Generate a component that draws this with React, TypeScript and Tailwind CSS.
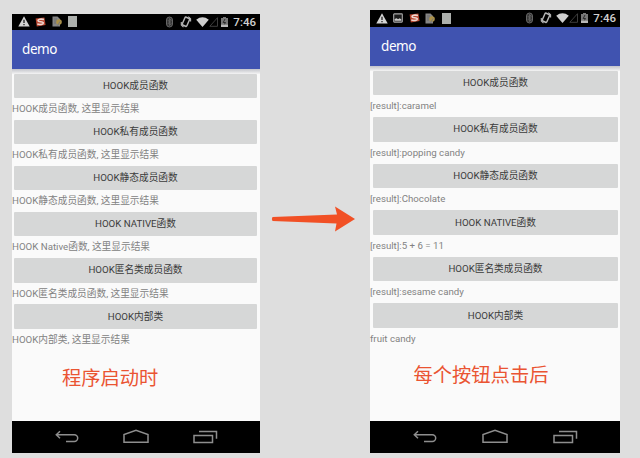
import React from "react";

type Row = { button: string; result: string };

const before: Row[] = [
  { button: "HOOK成员函数", result: "HOOK成员函数, 这里显示结果" },
  { button: "HOOK私有成员函数", result: "HOOK私有成员函数, 这里显示结果" },
  { button: "HOOK静态成员函数", result: "HOOK静态成员函数, 这里显示结果" },
  { button: "HOOK NATIVE函数", result: "HOOK Native函数, 这里显示结果" },
  { button: "HOOK匿名类成员函数", result: "HOOK匿名类成员函数, 这里显示结果" },
  { button: "HOOK内部类", result: "HOOK内部类, 这里显示结果" },
];

const results = [
  "[result]:caramel",
  "[result]:popping candy",
  "[result]:Chocolate",
  "[result]:5 + 6 = 11",
  "[result]:sesame candy",
  "fruit candy",
];

const after: Row[] = before.map((row, i) => ({ button: row.button, result: results[i] }));

function WarningIcon() {
  return (
    <svg className="block h-[11px] w-[12px]" viewBox="0 0 12 11">
      <path d="M6 .3 11.7 10.6H.3Z" fill="#d4d4d4" />
      <path d="M6 3.8V7M6 8v1.3" stroke="#222" strokeWidth="1.3" />
    </svg>
  );
}

function PhotoIcon() {
  return (
    <svg className="block h-[10px] w-[10px]" viewBox="0 0 10 10">
      <rect x=".7" y=".9" width="8.6" height="8.2" rx=".6" fill="#1c1c1c" stroke="#aaa" strokeWidth="1.1" />
      <path d="M1.6 7.8V6L3.7 5.2 5 6.3 6.7 5.2 8.4 6.600V7.800Z" fill="#ccc" />
    </svg>
  );
}

function SogouIcon() {
  return (
    <svg className="block h-[10px] w-[11px]" viewBox="0 0 11 10">
      <path d="M.6 1.6 9.4.4 10.6 8 1.8 9.6Z" fill="#b8452e" />
      <path d="M9 2.500C6 1.700 2.900 2.200 3 3.700c.1 1.500 5.300.5 5.300 2.200C8.300 7.500 5 7.800 2.300 7.100" fill="none" stroke="#ecd6cf" strokeWidth="1.600" />
    </svg>
  );
}

function NoteIcon() {
  return (
    <svg className="block h-[11px] w-[10px]" viewBox="0 0 10 11">
      <path d="M.5.5H5.500L8 3V10.500H.5Z" fill="#858585" />
      <path d="M2 3h3M2 5h3M2 7h2" stroke="#666" strokeWidth=".7" />
      <circle cx="7" cy="6" r="2.800" fill="#ab9148" />
      <path d="M5.500 9.700 8 5.500" stroke="#777" strokeWidth="1" />
    </svg>
  );
}

function SystemIcons() {
  return (
    <svg className="block h-[12px] w-[66px]" viewBox="0 0 66 12">
      <g fill="none" stroke="#666" strokeWidth="1">
        <rect x="1.500" y="1" width="6" height="10" rx="3" fill="#353535" />
        <path d="M2.800 4 6.200 7.800 4.500 9.500V2.500L6.200 4.200 2.800 8" strokeWidth=".8" />
      </g>
      <g fill="none" stroke="#b5b5b5">
        <rect x="18.400" y="1.500" width="5" height="8.500" rx="1" transform="rotate(24 20.900 5.800)" strokeWidth="1.500" />
        <path d="M16.300 6v3l2.200 2.200M25.600 5.500V2.700L23.300.7" strokeWidth="1.100" />
      </g>
      <path d="M31.200 3.700Q37.500-1.200 43.800 3.700L37.500 11Z" fill="#cfcfcf" />
      <path d="M44.800 10.300H52.500V1.700Z" fill="none" stroke="#444" strokeWidth=".9" />
      <path d="M58 1h3v1h2V11H56V2h2Z" fill="#777" />
      <path d="M60 3 58.200 6.500H60.500L59.300 8.500" fill="none" stroke="#222" strokeWidth=".9" />
      <path d="M56 8.700h7V11h-7Z" fill="#b9b9b9" />
    </svg>
  );
}

function NavBar() {
  return (
    <div className="flex h-[31.500px] shrink-0 items-center justify-between bg-black px-[42.500px]">
      <svg className="block h-[14px] w-[25px]" viewBox="0 0 25 14" fill="none" stroke="#8e8e8e" strokeWidth="1.500">
        <path d="M5 1.300 1.300 4.700 5 8.200M1.500 4.700H19.300A3.400 3.400 0 0 1 19.300 11.500H11" />
      </svg>
      <svg className="block h-[15px] w-[27px]" viewBox="0 0 27 15" fill="none" stroke="#8e8e8e" strokeWidth="1.500">
        <path d="M1 13.300V5.600L13 1.300 25 5.600V13.300Z" />
      </svg>
      <svg className="block h-[14px] w-[25px]" viewBox="0 0 25 14" fill="none" stroke="#8e8e8e" strokeWidth="1.500">
        <path d="M1 5.500H19.500V12.600H1ZM6 1.600H23.500V8.700" />
      </svg>
    </div>
  );
}

type PhoneProps = {
  rows: Row[];
  caption: string;
  photo?: boolean;
  frame: string;
  bar: string;
  row: string;
  button: string;
  captionBox: string;
};

function Phone({ rows, caption, photo, frame, bar, row, button, captionBox }: PhoneProps) {
  return (
    <section className={"flex shrink-0 flex-col bg-[#fafafa] " + frame}>
      <div className="flex h-[16.500px] shrink-0 items-center justify-between bg-black pr-[4px] pl-[5.500px]">
        <div className="flex items-center gap-[5.500px]">
          <WarningIcon />
          {photo && <PhotoIcon />}
          <SogouIcon />
          <NoteIcon />
          <span className="ml-[1px] h-[11px] w-[9px] bg-[#adb0ad]" />
        </div>
        <div className="flex items-center gap-[2px]">
          <SystemIcons />
          <span className="text-[11.500px] leading-[16px] font-medium text-[#d0d0d0]">7:46</span>
        </div>
      </div>
      <header className={"flex shrink-0 items-center bg-[#4053b0] font-['Noto_Sans',sans-serif] text-[13.500px] tracking-[-0.4px] text-white " + bar}>
        demo
      </header>
      <div className="h-[5px] shrink-0 bg-linear-to-b from-[#c3c4cb] to-[#f4f4f4]" />
      {rows.map((item) => (
        <div key={item.button} className={"flex shrink-0 flex-col " + row}>
          <button className={"flex h-[24.500px] shrink-0 items-center justify-center rounded-[1px] bg-[#d6d7d7] text-[9.700px] leading-none whitespace-nowrap text-[#3b3b3b] " + button}>
            {item.button}
          </button>
          <p className="pt-[4px] text-[9.700px] leading-[14px] whitespace-nowrap text-[#828282]">{item.result}</p>
        </div>
      ))}
      <p className={"text-[19.300px] leading-[28px] whitespace-nowrap text-[#ea5432] " + captionBox}>{caption}</p>
      <div className="flex-1" />
      <NavBar />
    </section>
  );
}

export default function App() {
  return (
    <main className="flex h-[458px] w-[640px] overflow-hidden bg-[#dedede] pl-[12px] font-[Roboto,'Noto_Sans_CJK_SC',sans-serif]">
      <Phone
        rows={before}
        caption="程序启动时"
        frame="mt-[13.500px] h-[439px] w-[248px]"
        bar="h-[38.500px] pl-[10px]"
        row="h-[46.150px]"
        button="ml-[2px] mr-[3px]"
        captionBox="pt-[15px] pl-[50px]"
      />
      <div className="flex w-[110px] shrink-0 pt-[205px] pl-[11px]">
        <svg className="block h-[28px] w-[85px]" viewBox="0 0 85 28">
          <path d="M1.500 12 66 9.500 64 1.500 84 14 64 26.500 65.500 18.500 1.500 16Q.2 14 1.500 12Z" fill="#f15025" />
        </svg>
      </div>
      <Phone
        rows={after}
        caption="每个按钮点击后"
        photo
        frame="mt-[10px] h-[442.500px] w-[250px]"
        bar="h-[39px] pl-[11px]"
        row="h-[46.550px]"
        button="ml-[3px] mr-[2px]"
        captionBox="pt-[12px] pl-[43.500px]"
      />
    </main>
  );
}
